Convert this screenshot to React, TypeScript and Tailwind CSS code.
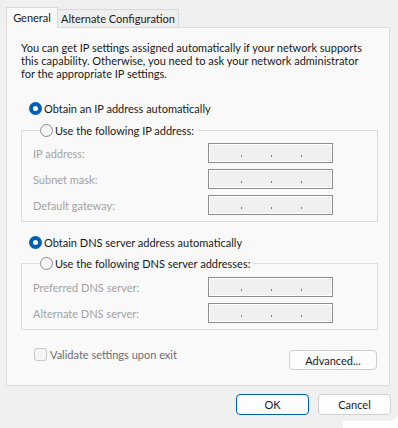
function Radio({ checked }: { checked: boolean }) {
  return checked ? (
    <span className="flex h-[13px] w-[13px] items-center justify-center rounded-full bg-[#005fb8]">
      <span className="h-[5px] w-[5px] rounded-full bg-white" />
    </span>
  ) : (
    <span className="h-[13px] w-[13px] rounded-full border border-[#8a8a8a] bg-[#f5f5f5]" />
  );
}

function IpBox() {
  return (
    <div className="flex h-[20px] w-[125px] items-end border border-[#8d8d8d] bg-[#f0f0f0] pb-[5px] pl-[32px] shadow-[inset_0_0_0_1px_#ffffff]">
      <span className="h-[2px] w-[1px] bg-[#6f7f99]" />
      <span className="ml-[29px] h-[2px] w-[1px] bg-[#6f7f99]" />
      <span className="ml-[29px] h-[2px] w-[1px] bg-[#6f7f99]" />
    </div>
  );
}

function Field({ label }: { label: string }) {
  return (
    <div className="flex h-[20px] items-center">
      <span className="w-[175px] text-[#a3a3a3]">{label}</span>
      <IpBox />
    </div>
  );
}

function Group({ legend, fields, pt }: { legend: string; fields: string[]; pt: string }) {
  return (
    <fieldset className="w-[357px] border border-[#dcdcdc] pb-[6px] pl-[11px]">
      <legend className="ml-[7px] flex h-[16px] items-center gap-[2px] pr-[3px]">
        <Radio checked={false} />
        <span>{legend}</span>
      </legend>
      <div className={`flex flex-col gap-[6px] ${pt}`}>
        {fields.map((f) => (
          <Field key={f} label={f} />
        ))}
      </div>
    </fieldset>
  );
}

export default function App() {
  return (
    <div
      className="h-[428px] w-[398px] overflow-hidden bg-white text-[11px] leading-[13px] text-[#1a1a1a]"
      style={{ fontFamily: '"Segoe UI", Lato, sans-serif' }}
    >
      <div className="flex h-[421px] flex-col rounded-br-[8px] bg-[#f0f0f0] px-[6px] pt-[7px]">
        <div className="flex items-end whitespace-nowrap">
          <div className="z-10 -mb-px flex h-[21px] w-[52px] items-center justify-center border-x border-t border-[#d9d9d9] bg-[#f9f9f9] pb-[1px]">
            General
          </div>
          <div className="flex h-[18px] w-[121px] items-center justify-center border-r border-t border-[#d9d9d9] bg-[#eeeeee]">
            Alternate Configuration
          </div>
        </div>
        <div className="flex h-[359px] w-[384px] flex-col border border-[#dcdcdc] bg-[#f9f9f9] pl-[14px] pt-[13px]">
          <p className="whitespace-nowrap">
            You can get IP settings assigned automatically if your network supports
            <br />
            this capability. Otherwise, you need to ask your network administrator
            <br />
            for the appropriate IP settings.
          </p>
          <div className="ml-[8px] mt-[20px] flex h-[16px] items-center gap-[2px]">
            <Radio checked />
            <span>Obtain an IP address automatically</span>
          </div>
          <div className="mt-[6px]">
            <Group
              legend="Use the following IP address:"
              fields={["IP address:", "Subnet mask:", "Default gateway:"]}
              pt="pt-[5px]"
            />
          </div>
          <div className="ml-[8px] mt-[12px] flex h-[16px] items-center gap-[2px]">
            <Radio checked />
            <span>Obtain DNS server address automatically</span>
          </div>
          <div className="mt-[5px]">
            <Group
              legend="Use the following DNS server addresses:"
              fields={["Preferred DNS server:", "Alternate DNS server:"]}
              pt="pt-[6px]"
            />
          </div>
          <div className="mt-[18px] flex w-[356px] items-start justify-between">
            <div className="ml-[13px] flex items-center gap-[3px]">
              <span className="h-[13px] w-[13px] rounded-[3px] border border-[#c6c6c6] bg-[#f5f5f5]" />
              <span className="text-[#6d6d6d]">Validate settings upon exit</span>
            </div>
            <button className="mt-[2px] h-[20px] w-[88px] rounded-[4px] border border-[#d0d0d0] bg-[#fdfdfd]">
              Advanced...
            </button>
          </div>
        </div>
        <div className="mt-[8px] flex justify-end gap-[9px] pr-[1px]">
          <button className="h-[21px] w-[73px] rounded-[4px] border border-[#005fb8] bg-[#fdfdfd]">
            OK
          </button>
          <button className="h-[21px] w-[73px] rounded-[4px] border border-[#d0d0d0] bg-[#fdfdfd]">
            Cancel
          </button>
        </div>
      </div>
      <div className="h-[7px] w-[343px] bg-[#f0f0f0]" />
    </div>
  );
}
